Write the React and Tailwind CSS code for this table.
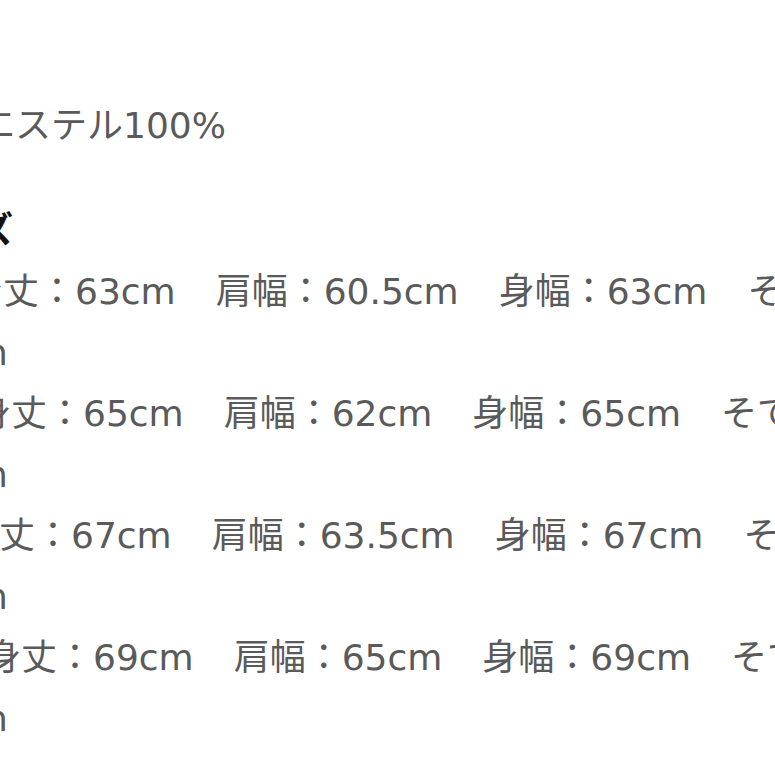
import React from 'react';

const sizes = [
  { shift: '-ml-[33px]', parts: ['身丈：63cm', '肩幅：60.5cm', '身幅：63cm', 'そで丈：58.5cm'] },
  { shift: '-ml-[25px]', parts: ['身丈：65cm', '肩幅：62cm', '身幅：65cm', 'そで丈：60cm'] },
  { shift: '-ml-[37px]', parts: ['身丈：67cm', '肩幅：63.5cm', '身幅：67cm', 'そで丈：61.5cm'] },
  { shift: '-ml-[15px]', parts: ['身丈：69cm', '肩幅：65cm', '身幅：69cm', 'そで丈：63cm'] },
];

function Row({ shift, parts }) {
  return (
    <div className={`h-[61px] leading-[61px] whitespace-nowrap ${shift}`}>
      {parts.map((p, i) => (
        <React.Fragment key={i}>
          {i > 0 && <span className="inline-block w-[40px]">　</span>}
          {p}
        </React.Fragment>
      ))}
    </div>
  );
}

export default function App() {
  return (
    <div className="w-[775px] h-[775px] overflow-hidden bg-white text-[36px] text-[#5a5a5a] font-['DejaVu_Sans','Noto_Sans_CJK_JP',sans-serif]">
      <div className="flex flex-col pt-[95px]">
        <div className="h-[61px] leading-[61px] whitespace-nowrap -ml-[93px]">ポリエステル100%</div>

        <div className="mt-[44px] h-[61px] leading-[61px] whitespace-nowrap -ml-[94px] font-bold text-[#111]">
          サイズ
        </div>

        {sizes.map((row, i) => (
          <div key={i} className="flex flex-col">
            <Row shift={row.shift} parts={row.parts} />
            <div className="h-[61px] leading-[61px] whitespace-nowrap -ml-[47px]">cm</div>
          </div>
        ))}
      </div>
    </div>
  );
}
